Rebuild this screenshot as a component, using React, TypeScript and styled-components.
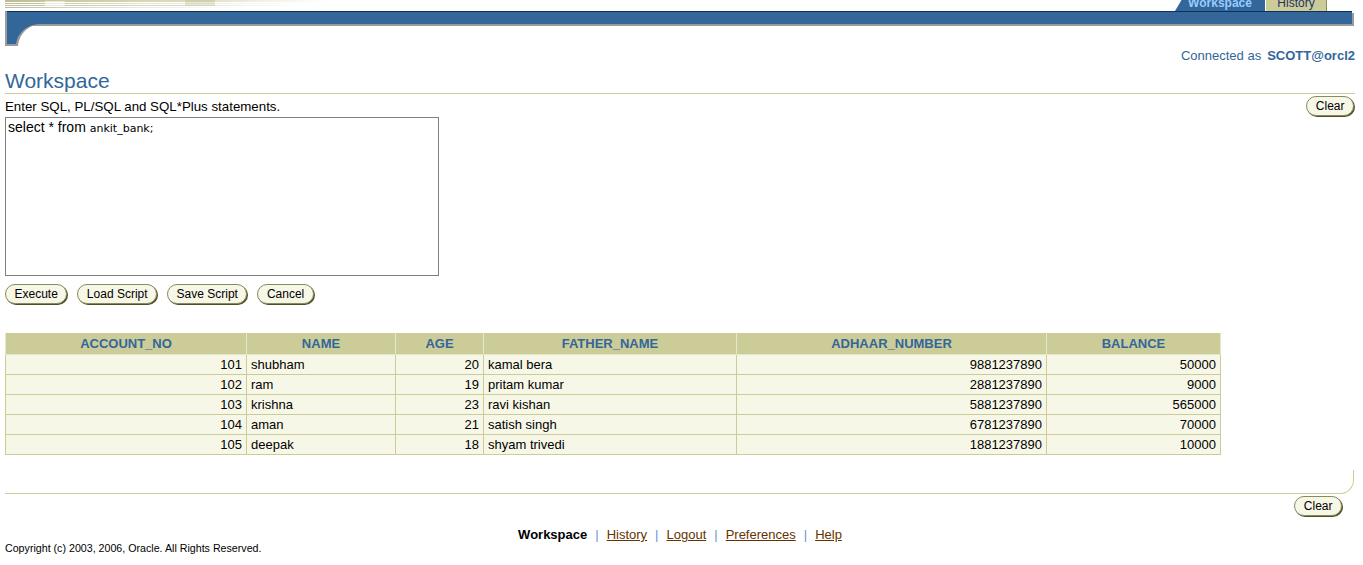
import React from 'react';
import styled, { createGlobalStyle } from 'styled-components';

const GlobalStyle = createGlobalStyle`
  html, body { margin: 0; padding: 0; background: #ffffff; }
  body {
    font-family: "Liberation Sans", Arial, sans-serif;
    font-size: 13px;
    color: #000000;
  }
`;

const Page = styled.div`
  width: 1363px;
  box-sizing: border-box;
  padding: 0 8px 0 5px;
`;

const TopStrip = styled.div`
  display: flex;
  align-items: flex-end;
  height: 11px;
  overflow: hidden;
`;

const Tabs = styled.div`
  display: flex;
  align-items: flex-end;
  gap: 1px;
  margin-left: auto;
  margin-right: 28px;
`;

const Tab = styled.div<{ $active?: boolean }>`
  box-sizing: border-box;
  height: 22px;
  width: ${p => (p.$active ? '90px' : '61px')};
  display: flex;
  align-items: flex-end;
  justify-content: center;
  padding-bottom: 2px;
  font-size: 12px;
  line-height: 12px;
  font-weight: ${p => (p.$active ? 'bold' : 'normal')};
  color: ${p => (p.$active ? '#99ccff' : '#1f3366')};
  background: ${p => (p.$active ? '#336699' : '#cccc99')};
  border-right: ${p => (p.$active ? 'none' : '1px solid #8c8c5a')};
  clip-path: ${p => (p.$active ? 'polygon(13px 0, 100% 0, 100% 100%, 0 100%)' : 'none')};
`;

const Bar = styled.div`
  height: 12px;
  margin: 0 3px 0 2px;
  background: #336699;
  border-top: 1px solid #0f2f5c;
  box-shadow: 2px 2px 0 #9a9a9a, -2px 0 0 #9a9a9a;
`;

const Curve = styled.svg`
  display: block;
`;

const ConnectedRow = styled.div`
  margin-top: 2px;
  text-align: right;
  line-height: 16px;
  font-size: 13px;
  color: #336699;
`;

const User = styled.b`
  margin-left: 6px;
`;

const Heading = styled.h1`
  margin: 5px 0 0;
  font-size: 21px;
  line-height: 24px;
  font-weight: normal;
  color: #336699;
  border-bottom: 1px solid #cccc99;
`;

const InstructionRow = styled.div`
  display: flex;
  justify-content: space-between;
  align-items: center;
  height: 23px;
  padding-top: 1px;
  box-sizing: border-box;
`;

const Instruction = styled.span`
  font-size: 13.3px;
`;

const Button = styled.button<{ $edge?: number }>`
  box-sizing: border-box;
  height: 20px;
  margin: 0 ${p => p.$edge ?? 0}px 1px 0;
  padding: 0 8.5px;
  border: 1px solid #8a8a60;
  border-radius: 10px;
  background: #f7f7e7;
  box-shadow: 1px 1px 0 #4f4f26;
  font-family: "Liberation Sans", Arial, sans-serif;
  font-size: 12px;
  line-height: 18px;
  color: #000;
  cursor: pointer;
`;

const Editor = styled.div`
  box-sizing: border-box;
  width: 434px;
  height: 159px;
  border: 1px solid #7f7f7f;
  padding: 1px 2px;
  line-height: 16px;
`;

const Sql = styled.span`
  font-family: "Liberation Sans", Arial, sans-serif;
  font-size: 14px;
`;

const SqlName = styled.span`
  font-family: "DejaVu Sans", Verdana, sans-serif;
  font-size: 11px;
`;

const ButtonRow = styled.div`
  display: flex;
  gap: 10px;
  margin-top: 8px;
`;

const Table = styled.table`
  margin-top: 28px;
  width: 1215px;
  table-layout: fixed;
  border-collapse: collapse;
  font-size: 13px;
`;

const Th = styled.th`
  height: 21px;
  padding: 0 4px;
  background: #cccc99;
  color: #336699;
  font-weight: bold;
  text-align: center;
  border: 1px solid #e6e6c8;
  border-top: none;
  line-height: 18px;
`;

const Td = styled.td<{ $num?: boolean }>`
  height: 19px;
  padding: 0 4px;
  background: #f7f7e7;
  border: 1px solid #cccc99;
  text-align: ${p => (p.$num ? 'right' : 'left')};
  line-height: 17px;
  white-space: nowrap;
`;

const BottomRule = styled.div`
  margin-top: 15px;
  margin-right: 1px;
  height: 23px;
  border-bottom: 1px solid #cccc99;
  border-right: 1px solid #cccc99;
  border-bottom-right-radius: 14px;
`;

const BottomActions = styled.div`
  display: flex;
  justify-content: flex-end;
  margin-top: 2px;
  padding-right: 13px;
`;

const FooterNav = styled.div`
  margin-top: 10px;
  text-align: center;
  line-height: 16px;
  font-size: 13px;
`;

const Current = styled.b`
  color: #000;
`;

const Sep = styled.span`
  color: #6699cc;
  margin: 0 8px;
`;

const NavLink = styled.a`
  color: #663300;
  text-decoration: underline;
`;

const Copyright = styled.div`
  font-size: 10.67px;
  line-height: 11px;
`;

const columns = ['ACCOUNT_NO', 'NAME', 'AGE', 'FATHER_NAME', 'ADHAAR_NUMBER', 'BALANCE'];
const widths = [241, 149, 88, 253, 310, 174];
const numeric = [true, false, true, false, true, true];

const rows: (string | number)[][] = [
  [101, 'shubham', 20, 'kamal bera', 9881237890, 50000],
  [102, 'ram', 19, 'pritam kumar', 2881237890, 9000],
  [103, 'krishna', 23, 'ravi kishan', 5881237890, 565000],
  [104, 'aman', 21, 'satish singh', 6781237890, 70000],
  [105, 'deepak', 18, 'shyam trivedi', 1881237890, 10000],
];

const Decoration = () => (
  <svg width="330" height="11" viewBox="0 0 330 11" aria-hidden="true">
    <defs>
      <linearGradient id="fade" x1="0" x2="1" y1="0" y2="0">
        <stop offset="0" stopColor="#b7b78a" stopOpacity="0.9" />
        <stop offset="0.6" stopColor="#c8c8a0" stopOpacity="0.6" />
        <stop offset="1" stopColor="#e0e0c8" stopOpacity="0" />
      </linearGradient>
      <linearGradient id="fade2" x1="0" x2="1" y1="0" y2="0">
        <stop offset="0" stopColor="#9c9c6a" stopOpacity="0.7" />
        <stop offset="1" stopColor="#d8d8c0" stopOpacity="0" />
      </linearGradient>
    </defs>
    <rect x="0" y="0" width="330" height="2" fill="url(#fade)" />
    <rect x="0" y="3" width="320" height="1" fill="url(#fade2)" />
    <rect x="0" y="5" width="300" height="1" fill="url(#fade)" />
    <rect x="0" y="7" width="250" height="1" fill="url(#fade2)" />
    <rect x="40" y="1" width="20" height="6" fill="#ffffff" opacity="0.6" />
    <rect x="180" y="0" width="30" height="6" fill="#a4a470" opacity="0.25" />
  </svg>
);

export default function App() {
  return (
    <>
      <GlobalStyle />
      <Page>
        <TopStrip>
          <Decoration />
          <Tabs>
            <Tab $active>Workspace</Tab>
            <Tab>History</Tab>
          </Tabs>
        </TopStrip>
        <Bar />
        <Curve width="44" height="22" viewBox="0 0 44 22" aria-hidden="true">
          <path d="M0 0 H37 A24 24 0 0 0 13 21.5 V22 H0 Z" fill="#9a9a9a" />
          <path d="M2 0 H35 A24 24 0 0 0 11 19.5 V20 H2 Z" fill="#336699" />
        </Curve>
        <ConnectedRow>
          Connected as<User>SCOTT@orcl2</User>
        </ConnectedRow>
        <Heading>Workspace</Heading>
        <InstructionRow>
          <Instruction>Enter SQL, PL/SQL and SQL*Plus statements.</Instruction>
          <Button $edge={1}>Clear</Button>
        </InstructionRow>
        <Editor role="textbox">
          <Sql>select * from </Sql>
          <SqlName>ankit_bank;</SqlName>
        </Editor>
        <ButtonRow>
          <Button>Execute</Button>
          <Button>Load Script</Button>
          <Button>Save Script</Button>
          <Button>Cancel</Button>
        </ButtonRow>
        <Table>
          <colgroup>
            {widths.map((w, i) => (
              <col key={i} style={{ width: w }} />
            ))}
          </colgroup>
          <thead>
            <tr>
              {columns.map(c => (
                <Th key={c}>{c}</Th>
              ))}
            </tr>
          </thead>
          <tbody>
            {rows.map((r, i) => (
              <tr key={i}>
                {r.map((v, j) => (
                  <Td key={j} $num={numeric[j]}>
                    {v}
                  </Td>
                ))}
              </tr>
            ))}
          </tbody>
        </Table>
        <BottomRule />
        <BottomActions>
          <Button>Clear</Button>
        </BottomActions>
        <FooterNav>
          <Current>Workspace</Current>
          <Sep>|</Sep>
          <NavLink href="#">History</NavLink>
          <Sep>|</Sep>
          <NavLink href="#">Logout</NavLink>
          <Sep>|</Sep>
          <NavLink href="#">Preferences</NavLink>
          <Sep>|</Sep>
          <NavLink href="#">Help</NavLink>
        </FooterNav>
        <Copyright>Copyright (c) 2003, 2006, Oracle. All Rights Reserved.</Copyright>
      </Page>
    </>
  );
}
